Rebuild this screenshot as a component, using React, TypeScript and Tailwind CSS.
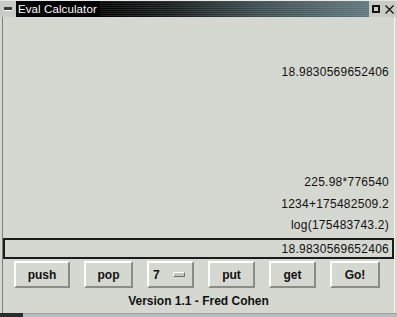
import React from 'react';

const buttons = ['push', 'pop', 'menu', 'put', 'get', 'Go!'];
const widths: Record<string, string> = {
  push: 'w-[56px]',
  pop: 'w-[49px]',
  menu: 'w-[47px]',
  put: 'w-[47px]',
  get: 'w-[47px]',
  'Go!': 'w-[50px]',
};

function Raised({ className, children }: { className?: string; children?: React.ReactNode }) {
  return (
    <div
      className={`h-[27px] flex items-center border-2 border-t-white border-l-white border-b-[#8a8d87] border-r-[#8a8d87] bg-[#d5d8d0] ${className ?? ''}`}
    >
      {children}
    </div>
  );
}

export default function App() {
  return (
    <div className="w-[397px] h-[317px] flex flex-col bg-[#d5d8d0] overflow-hidden font-['Liberation_Sans',Arial,sans-serif] text-[#111]">
      {/* title bar */}
      <div className="h-[17px] flex shrink-0 bg-[#c9ccc5] border-t border-[#e8e8e8]">
        <div className="w-[16px] flex items-center justify-center">
          <div className="w-[8px] h-[4px] bg-[#3a3a3a] border-b border-white" />
        </div>
        <div className="bg-black text-white text-[11.5px] leading-[16px] pl-[2px] pr-[3px] tracking-[0.1px]">
          Eval Calculator
        </div>
        <div className="relative flex-1 bg-[linear-gradient(to_right,#000_0%,#141a1b_25%,#3c4c4f_60%,#5d767a_100%)]">
          <div className="absolute inset-0 bg-[repeating-linear-gradient(to_bottom,rgba(255,255,255,0.12)_0px,rgba(255,255,255,0.12)_1px,transparent_1px,transparent_2px)]" />
        </div>
        <div className="w-[28px] flex items-center gap-[5px] pl-[3px]">
          <div className="w-[8px] h-[8px] border-2 border-[#111]" />
          <svg width="9" height="9" viewBox="0 0 9 9">
            <path d="M0.5 0.5 L8.5 8.5 M8.5 0.5 L0.5 8.5" stroke="#111" strokeWidth="1.2" />
          </svg>
        </div>
      </div>

      {/* body */}
      <div className="flex-1 flex flex-col border-l border-l-[#7d807a] ml-[2px] border-r border-r-[#f2f2f2] mr-[2px]">
        <div className="flex-1 flex flex-col text-[12px] tracking-[0.25px] text-right pr-[5px]">
          <div className="mt-[45px] h-[21px] leading-[21px]">18.9830569652406</div>
          <div className="flex-1" />
          <div className="h-[21px] leading-[21px]">225.98*776540</div>
          <div className="h-[22px] leading-[22px]">1234+175482509.2</div>
          <div className="h-[21px] leading-[21px] mb-[2px]">log(175483743.2)</div>
        </div>

        <div className="h-[21px] border-2 border-[#1b1b1b] flex items-center justify-end pr-[3px] text-[12px] tracking-[0.25px]">
          18.9830569652406
        </div>

        <div className="mt-[2px] flex pl-[11px] gap-[14px]">
          {buttons.map((b) =>
            b === 'menu' ? (
              <Raised key={b} className={`${widths[b]} pl-[4px] gap-[13px]`}>
                <span className="text-[12px] font-bold">7</span>
                <div className="w-[12px] h-[5px] bg-[#c2c5be] border border-t-white border-l-white border-b-[#6e716b] border-r-[#6e716b]" />
              </Raised>
            ) : (
              <Raised key={b} className={`${widths[b]} justify-center`}>
                <span className="text-[12px] font-bold">{b}</span>
              </Raised>
            )
          )}
        </div>

        <div className="h-[25px] flex items-center justify-center text-[12px] font-bold">
          Version 1.1 - Fred Cohen
        </div>
      </div>

      {/* bottom frame */}
      <div className="h-[4px] flex shrink-0">
        <div className="w-[23px] bg-[#2b2d2c]" />
        <div className="flex-1 bg-[#b9bcc0] border-t border-[#9a9da0]" />
      </div>
    </div>
  );
}
